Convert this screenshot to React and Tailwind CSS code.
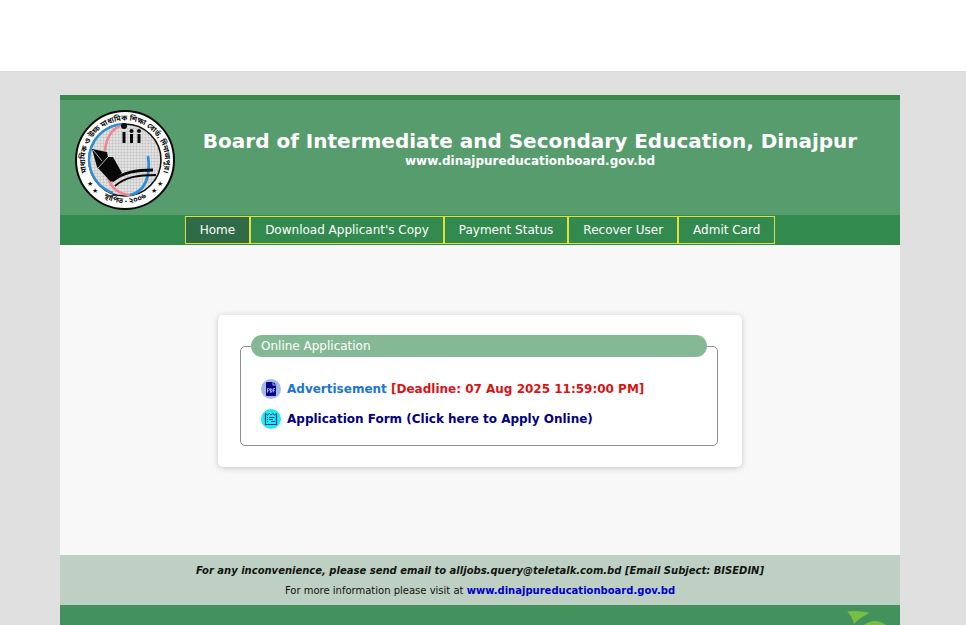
const navItems = [
  "Home",
  "Download Applicant's Copy",
  "Payment Status",
  "Recover User",
  "Admit Card",
];

const BoardLogo = () => (
  <svg viewBox="0 0 110 112" className="h-[112px] w-[110px] shrink-0" role="img" aria-label="Board logo">
    <defs>
      <pattern id="grid" width="3" height="3" patternUnits="userSpaceOnUse">
        <rect width="3" height="3" fill="#e2e2e2" />
        <path d="M0 0H3M0 0V3" stroke="#b4b4b4" strokeWidth="0.8" />
      </pattern>
      <path id="ringTop" d="M19 74A40 40 0 1 1 91 74" />
      <path id="ringBottom" d="M26 88A43 43 0 0 0 84 88" />
    </defs>
    <circle cx="55" cy="56" r="49" fill="#fff" stroke="#0b0b0b" strokeWidth="2" />
    <circle cx="55" cy="56" r="36" fill="url(#grid)" stroke="#111" strokeWidth="1.6" />
    <path d="M53 20A36 36 0 0 0 19 56A36 36 0 0 0 43 89" fill="none" stroke="#2f8fd0" strokeWidth="2.5" />
    <path d="M50 22C41 26 36 35 35 47" fill="none" stroke="#ee8796" strokeWidth="2.5" />
    <path d="M38 74C41 83 47 90 60 91" fill="none" stroke="#ee8796" strokeWidth="2.5" />
    <path d="M78 52C81 72 75 88 60 91" fill="none" stroke="#2f8fd0" strokeWidth="2.8" />
    <path d="M22 45L37 48L38 53L43 53L52 69L41 78L27 63Z" fill="#080808" />
    <path d="M23 46L32 57M28 64L38 53" stroke="#ddd" strokeWidth="0.8" />
    <path d="M42 77C54 68 66 66 83 66" fill="none" stroke="#080808" strokeWidth="3" />
    <path d="M45 82C55 73 68 71 86 71" fill="none" stroke="#080808" strokeWidth="1.8" />
    <g fill="#080808">
      <circle cx="54" cy="22" r="3" />
      <circle cx="61.5" cy="27" r="2" />
      <circle cx="69" cy="27" r="2" />
      <rect x="52.5" y="28" width="3" height="11" />
      <rect x="60" y="30" width="3" height="9" />
      <rect x="67.5" y="30" width="3" height="9" />
    </g>
    <g fill="#111" className="font-['Noto_Sans_Bengali','Noto_Sans',sans-serif]">
      <text fontSize="7.5" fontWeight="700">
        <textPath href="#ringTop" startOffset="50%" textAnchor="middle">
          মাধ্যমিক ও উচ্চ মাধ্যমিক শিক্ষা বোর্ড, দিনাজপুর।
        </textPath>
      </text>
      <text fontSize="7.5" fontWeight="700">
        <textPath href="#ringBottom" startOffset="50%" textAnchor="middle">
          স্থাপিত - ২০০৬
        </textPath>
      </text>
      <g fontSize="7" className="font-['DejaVu_Sans',sans-serif]">
        <text x="17" y="82">★</text>
        <text x="22" y="89">★</text>
        <text x="87" y="82">★</text>
        <text x="81" y="89">★</text>
      </g>
    </g>
  </svg>
);

const PdfIcon = () => (
  <svg viewBox="0 0 20 20" className="size-5 shrink-0" aria-hidden="true">
    <circle cx="10" cy="10" r="10" fill="#a3bbe4" />
    <path d="M6 3H11.5V6.5H15V16Q15 17 14 17H6Q5 17 5 16V4Q5 3 6 3Z" fill="#06068c" />
    <path d="M12.5 3L15 5.5H12.5Z" fill="#06068c" />
    <path d="M6.5 13.5V9.5H7.5Q8.5 9.5 8.5 10.5T7.5 11.7H6.5M9.5 9.5V13.5Q11 13.5 11 11.5T9.5 9.5M12.3 13.5V9.5H14M12.3 11.5H13.7" fill="none" stroke="#c5d3f5" strokeWidth="0.8" />
  </svg>
);

const FormIcon = () => (
  <svg viewBox="0 0 20 20" className="size-5 shrink-0" aria-hidden="true">
    <circle cx="10" cy="10" r="10" fill="#20e8f4" />
    <path d="M4.5 4.5V15.5H15.5V4.5" fill="none" stroke="#12457e" strokeWidth="1.2" />
    <path d="M4.5 4.5L6.5 6L8.3 4.5L10 6L11.8 4.5L13.5 6L15.5 4.5M6 8.5H7M8 8.5H13.5M6 10.5H7M8 10.5H12M6 12.5H7M10 12.5H14" fill="none" stroke="#12457e" />
  </svg>
);

const App = () => {
  return (
    <div className="min-h-screen bg-[#e0e0e0] font-['DejaVu_Sans',Verdana,sans-serif] text-[12px]">
      <div className="h-[72px] border-b border-[#d8dfe4] bg-white" />

      <div className="mr-1.5 px-4 pt-[23px]">
        <div className="mx-auto max-w-[840px] bg-[#f8f8f8]">
          <header className="flex h-[120px] items-start border-t-5 border-[#388850] bg-[#579c6d] pt-1 pl-2.5 text-white">
            <BoardLogo />
            <div className="flex-1 pt-6 pr-5 text-center font-bold">
              <h1 className="text-[20px] leading-[26px]">
                Board of Intermediate and Secondary Education, Dinajpur
              </h1>
              <p className="text-[12px] leading-[14px]">www.dinajpureducationboard.gov.bd</p>
            </div>
          </header>

          <nav className="flex h-[30px] justify-center bg-[#338a4e] py-px">
            {navItems.map((item) => (
              <a
                key={item}
                href="#"
                className={`flex items-center border border-[#dfe03c] px-3.5 text-white ${
                  item === "Home" ? "bg-[#306b48]" : ""
                }`}
              >
                {item}
              </a>
            ))}
          </nav>

          <main className="flex min-h-[310px] justify-center pt-[70px]">
            <section className="w-full max-w-[524px] self-start rounded-[5px] bg-white pt-5 pr-6 pb-[21px] pl-[22px] shadow-[0_1px_6px_rgba(0,0,0,0.2)]">
              <fieldset className="rounded-[5px] border border-[#909090] px-2.5 pb-4">
                <legend className="w-full rounded-full bg-[#85b995] px-2.5 leading-[22px] text-white">
                  Online Application
                </legend>
                <ul className="space-y-2.5 px-2.5 pt-[22px] font-bold leading-5">
                  <li className="flex gap-1.5">
                    <PdfIcon />
                    <p className="text-[#d81414]">
                      <a href="#" className="text-[#1976d2]">Advertisement</a>{" "}
                      [Deadline: 07 Aug 2025 11:59:00 PM]
                    </p>
                  </li>
                  <li className="flex gap-1.5">
                    <FormIcon />
                    <a href="#" className="text-[#000080]">
                      Application Form (Click here to Apply Online)
                    </a>
                  </li>
                </ul>
              </fieldset>
            </section>
          </main>

          <div className="bg-[#becfc3] pt-1.5 pb-1 text-center text-[10px] leading-5 text-[#101510]">
            <p className="font-bold italic">
              For any inconvenience, please send email to alljobs.query@teletalk.com.bd [Email Subject: BISEDIN]
            </p>
            <p>
              For more information please visit at{" "}
              <a href="#" className="font-bold text-[#0000cd]">www.dinajpureducationboard.gov.bd</a>
            </p>
          </div>

          <footer className="flex h-5 justify-end overflow-hidden bg-[#43915c] pr-2.5">
            <svg viewBox="0 0 46 20" className="h-5 w-[46px]" aria-hidden="true">
              <path d="M3 6.5Q14 5 26 8Q16 12 10 19Q8 11 3 6.5Z" fill="#76bf43" />
              <path d="M20 20Q31 12 42 20Z" fill="#76bf43" />
            </svg>
          </footer>
        </div>
      </div>
    </div>
  );
};

export default App;
